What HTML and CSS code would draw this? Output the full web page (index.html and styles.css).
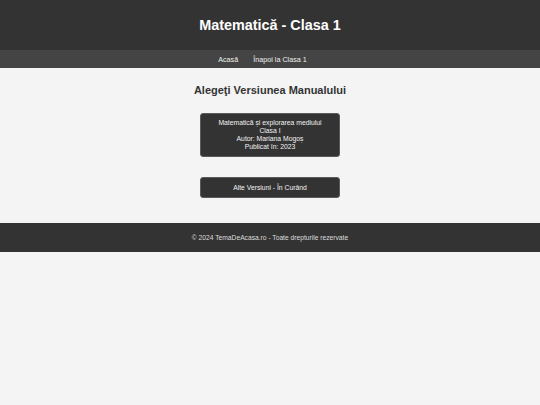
FILE: index.html
```html
<!DOCTYPE html>
<html lang="ro">
<head>
<meta charset="utf-8">
<title>Matematică - Clasa 1</title>
<link rel="stylesheet" href="styles.css">
</head>
<body>
<header class="site-header">
  <h1 class="site-title">Matematică - Clasa 1</h1>
</header>
<nav class="site-nav">
  <a href="#" class="nav-link">Acasă</a>
  <a href="#" class="nav-link">Înapoi la Clasa 1</a>
</nav>
<main class="content">
  <h2 class="section-title">Alegeţi Versiunea Manualului</h2>
  <a href="#" class="card">
    <span>Matematică și explorarea mediului</span>
    <span>Clasa I</span>
    <span>Autor: Mariana Mogoș</span>
    <span>Publicat în: 2023</span>
  </a>
  <div class="card card-soon">Alte Versiuni - În Curând</div>
</main>
<footer class="site-footer">
  <p>© 2024 TemaDeAcasa.ro - Toate drepturile rezervate</p>
</footer>
</body>
</html>
```

FILE: styles.css
```css
html, body {
  margin: 0;
  padding: 0;
}
body {
  background: #f4f4f4;
  font-family: "Liberation Sans", Arial, sans-serif;
  color: #333;
}
.site-header {
  background: #333;
  height: 50px;
  display: flex;
  align-items: center;
  justify-content: center;
}
.site-title {
  margin: 0;
  color: #fff;
  font-size: 14.4px;
  font-weight: bold;
}
.site-nav {
  background: #444;
  height: 18px;
  display: flex;
  align-items: center;
  justify-content: center;
}
.nav-link {
  color: #eee;
  text-decoration: none;
  font-size: 7.2px;
  margin-right: 15px;
}
.content {
  display: flex;
  flex-direction: column;
  align-items: center;
  padding: 16px 0 0;
  height: 155px;
  box-sizing: border-box;
}
.section-title {
  margin: 0 0 16px;
  font-size: 11px;
  line-height: 13px;
  font-weight: bold;
  color: #333;
}
.card {
  box-sizing: border-box;
  width: 140px;
  background: #333;
  color: #f2f2f2;
  border: 1px solid #5a5a5a;
  border-radius: 3px;
  text-decoration: none;
  display: flex;
  flex-direction: column;
  align-items: center;
  font-size: 6.8px;
  line-height: 8px;
  padding: 5px 4px;
}
.card-soon {
  margin-top: 20px;
  height: 21px;
  justify-content: center;
  padding: 0 4px;
}
.site-footer {
  background: #333;
  height: 29px;
  display: flex;
  align-items: center;
  justify-content: center;
}
.site-footer p {
  margin: 0;
  color: #ddd;
  font-size: 6.7px;
}
```
